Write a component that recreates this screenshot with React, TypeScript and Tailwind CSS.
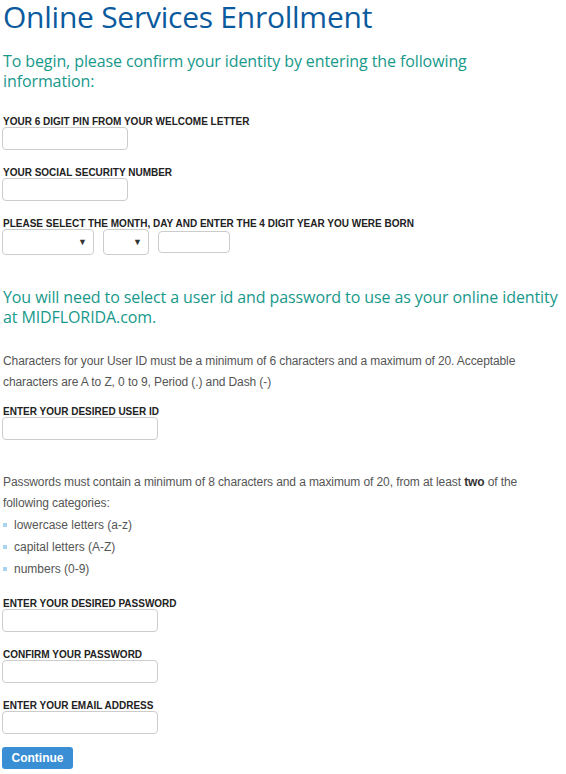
import React from "react";

const Label = ({ children }: { children: React.ReactNode }) => (
  <div className="pt-[2px] mb-[-1px] text-[10px] leading-[12px] font-bold text-[#222] uppercase">
    {children}
  </div>
);

const TextBox = ({ wide = false }: { wide?: boolean }) => (
  <input
    type="text"
    className={`block h-[23px] ${wide ? "w-[156px]" : "w-[126px]"} ml-[-1px] rounded-[4px] border border-[#ccc] bg-white`}
  />
);

const Caret = () => (
  <span className="text-[9px] text-[#333] leading-none">▼</span>
);

const App: React.FC = () => {
  return (
    <div className="w-[566px] min-h-[774px] bg-white pl-[3px] font-['Liberation_Sans',Arial,sans-serif]">
      <h1 className="font-['Open_Sans',sans-serif] text-[30px] leading-[34px] text-[#0b5a9e] -tracking-[0.25px]">
        Online Services Enrollment
      </h1>

      <p className="mt-[17px] font-['Open_Sans',sans-serif] text-[16px] leading-[20px] -tracking-[0.1px] text-[#17998b] pr-[60px]">
        To begin, please confirm your identity by entering the following information:
      </p>

      {/* identity fields */}
      <div className="mt-[23px]">
        <Label>Your 6 digit pin from your welcome letter</Label>
        <TextBox />
      </div>
      <div className="mt-[15px]">
        <Label>Your social security number</Label>
        <TextBox />
      </div>
      <div className="mt-[15px]">
        <Label>Please select the month, day and enter the 4 digit year you were born</Label>
        <div className="flex items-center ml-[-1px]">
          <div className="w-[92px] h-[26px] rounded-[4px] border border-[#ccc] flex items-center justify-end pr-[6px]">
            <Caret />
          </div>
          <div className="ml-[9px] w-[46px] h-[26px] rounded-[4px] border border-[#ccc] flex items-center justify-end pr-[6px]">
            <Caret />
          </div>
          <div className="ml-[9px] w-[72px] h-[22px] rounded-[4px] border border-[#ccc]" />
        </div>
      </div>

      <p className="mt-[32px] font-['Open_Sans',sans-serif] text-[16px] leading-[20px] -tracking-[0.1px] text-[#17998b]">
        You will need to select a user id and password to use as your online identity at MIDFLORIDA.com.
      </p>

      <p className="mt-[24px] text-[12px] leading-[21px] -tracking-[0.1px] text-[#555]">
        Characters for your User ID must be a minimum of 6 characters and a maximum of 20. Acceptable
        characters are A to Z, 0 to 9, Period (.) and Dash (-)
      </p>

      <div className="mt-[11px]">
        <Label>Enter your desired user id</Label>
        <TextBox wide />
      </div>

      <p className="mt-[32px] text-[12px] leading-[21px] -tracking-[0.1px] text-[#555] pr-[20px]">
        Passwords must contain a minimum of 8 characters and a maximum of 20, from at least{" "}
        <span className="font-bold text-[#333]">two</span> of the following categories:
      </p>
      <ul className="text-[12px] leading-[22px] text-[#555]">
        {["lowercase letters (a-z)", "capital letters (A-Z)", "numbers (0-9)"].map((t) => (
          <li key={t} className="flex items-center">
            <span className="w-[4px] h-[4px] bg-[#a9d3ef] mr-[7px]" />
            {t}
          </li>
        ))}
      </ul>

      <div className="mt-[16px]">
        <Label>Enter your desired password</Label>
        <TextBox wide />
      </div>
      <div className="mt-[15px]">
        <Label>Confirm your password</Label>
        <TextBox wide />
      </div>
      <div className="mt-[15px]">
        <Label>Enter your email address</Label>
        <TextBox wide />
      </div>

      <button className="mt-[13px] ml-[-1px] h-[22px] w-[71px] rounded-[3px] bg-[#3a8ed4] text-white text-[12px] font-bold">
        Continue
      </button>
    </div>
  );
};

export default App;
